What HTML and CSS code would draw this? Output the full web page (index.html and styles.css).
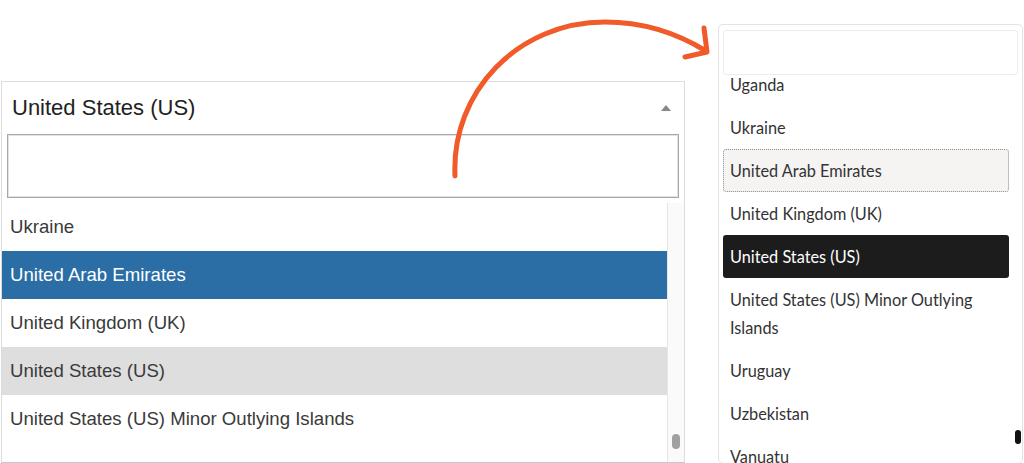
FILE: index.html
```html
<!DOCTYPE html>
<html lang="en">
<head>
    <meta charset="utf-8">
    <title>Select comparison</title>
    <link rel="stylesheet" href="styles.css">
</head>
<body>
    <div class="stage">
        <!-- Antes: select2 por defecto -->
        <div class="select-old">
            <div class="old-selection">
                <span>United States (US)</span>
                <span class="old-arrow"></span>
            </div>
            <div class="old-search">
                <input type="text" class="old-input">
            </div>
            <div class="old-results">
                <ul class="old-list">
                    <li>Ukraine</li>
                    <li class="highlighted">United Arab Emirates</li>
                    <li>United Kingdom (UK)</li>
                    <li class="selected">United States (US)</li>
                    <li>United States (US) Minor Outlying Islands</li>
                </ul>
                <div class="old-scroll"><span class="old-thumb"></span></div>
            </div>
        </div>

        <!-- Después: estilo nuevo -->
        <div class="select-new">
            <div class="new-search">
                <input type="text" class="new-input">
            </div>
            <div class="new-results">
                <ul class="new-list">
                    <li>Uganda</li>
                    <li>Ukraine</li>
                    <li class="focused">United Arab Emirates</li>
                    <li>United Kingdom (UK)</li>
                    <li class="current">United States (US)</li>
                    <li>United States (US) Minor Outlying Islands</li>
                    <li>Uruguay</li>
                    <li>Uzbekistan</li>
                    <li>Vanuatu</li>
                </ul>
                <div class="new-scroll"><span class="new-thumb"></span></div>
            </div>
        </div>

        <!-- Flecha -->
        <svg class="arrow" width="1024" height="463" viewBox="0 0 1024 463">
            <path d="M455 176 C451 92 518 22 605 22 C645 22 680 35 706 51" fill="none" stroke="#f15a29" stroke-width="5" stroke-linecap="round"/>
            <path d="M704 28 L707 52 L685 57" fill="none" stroke="#f15a29" stroke-width="5" stroke-linecap="round" stroke-linejoin="round"/>
        </svg>
    </div>
</body>
</html>
```

FILE: styles.css
```css
body {
    margin: 0;
    padding: 0;
    background: #ffffff;
    font-family: "Liberation Sans", Arial, sans-serif;
}

.stage {
    position: relative;
    width: 1024px;
    height: 463px;
    overflow: hidden;
    display: flex;
    align-items: flex-start;
}

/* ---- select viejo ---- */
.select-old {
    margin-top: 81px;
    margin-left: 1px;
    width: 682px;
    height: 380px;
    border: 1px solid #dcdcdc;
    border-bottom-color: #c8c8c8;
    display: flex;
    flex-direction: column;
    background: #fff;
}

.old-selection {
    height: 51px;
    display: flex;
    align-items: center;
    justify-content: space-between;
    padding: 0 13px 0 10px;
    font-size: 22px;
    color: #222;
}

.old-arrow {
    width: 0;
    height: 0;
    border-left: 5px solid transparent;
    border-right: 5px solid transparent;
    border-bottom: 6px solid #888;
}

.old-search {
    padding: 1px 5px 4px 5px;
}

.old-input {
    display: block;
    width: 100%;
    height: 64px;
    box-sizing: border-box;
    border: 1px solid #a8a8a8;
    box-shadow: inset 0 0 0 1px #e2e2e2;
    outline: none;
}

.old-results {
    flex: 1;
    display: flex;
    overflow: hidden;
    margin-top: 1px;
}

.old-list {
    list-style: none;
    margin: 0;
    padding: 0;
    flex: 1;
}

.old-list li {
    height: 48px;
    line-height: 48px;
    padding-left: 8px;
    font-size: 18.6px;
    color: #3a3a3a;
}

.old-list li.highlighted {
    background: #2b6ea6;
    color: #ffffff;
}

.old-list li.selected {
    background: #dedede;
}

.old-scroll {
    width: 16px;
    border-left: 1px solid #e6e6e6;
    background: #fafafa;
    display: flex;
    flex-direction: column;
    justify-content: flex-end;
    align-items: center;
    padding-bottom: 13px;
}

.old-thumb {
    width: 8px;
    height: 15px;
    border-radius: 5px;
    background: #a0a0a0;
}

/* ---- select nuevo ---- */
.select-new {
    margin-top: 24px;
    margin-left: 33px;
    width: 305px;
    height: 440px;
    border: 1px solid #e3e3e3;
    border-radius: 5px;
    box-sizing: border-box;
    display: flex;
    flex-direction: column;
    font-family: Lato, "Liberation Sans", sans-serif;
}

.new-search {
    padding: 5px 4px 0 4px;
}

.new-input {
    display: block;
    width: 100%;
    height: 45px;
    box-sizing: border-box;
    border: 1px solid #ececec;
    border-radius: 3px;
    outline: none;
}

.new-results {
    flex: 1;
    display: flex;
    overflow: hidden;
}

.new-list {
    list-style: none;
    margin: -12px 0 0 0;
    padding: 0 0 0 4px;
    flex: 1;
}

.new-list li {
    padding: 7.5px 6px;
    line-height: 28px;
    font-size: 16.3px;
    color: #333;
    border: 1px solid transparent;
    border-top: 0;
    border-bottom: 0;
}

.new-list li.focused {
    background: #f5f4f3;
    border: 1px dotted #8a8a8a;
    border-radius: 3px;
    padding: 6.5px 6px;
}

.new-list li.current {
    background: #1c1c1c;
    color: #ffffff;
    border-radius: 3px;
}

.new-scroll {
    width: 12px;
    display: flex;
    flex-direction: column;
    justify-content: flex-end;
    align-items: flex-end;
    padding-right: 1px;
    padding-bottom: 19px;
}

.new-thumb {
    width: 6px;
    height: 14px;
    border-radius: 3px;
    background: #111;
}

/* ---- flecha ---- */
.arrow {
    position: absolute;
    left: 0;
    top: 0;
    pointer-events: none;
}
```
